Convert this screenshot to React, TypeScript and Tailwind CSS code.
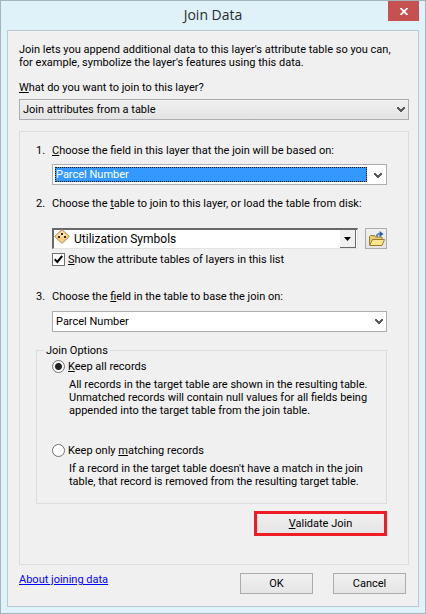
import { useState } from "react";
import type { ReactNode } from "react";

const App = () => {
  return (
    <div className="flex min-h-screen flex-col border border-[#a3b4bb] bg-[#dff2fa] px-1.5 pb-1.5 font-['Roboto',sans-serif] text-[11px] leading-[13px] text-black">
      <TitleBar />
      <main className="flex-1 border border-[#b9cbd2] bg-[#f0f0f0] pt-3 pr-[9px] pb-3 pl-[11px]">
        <p>
          Join lets you append additional data to this layer's attribute table
          so you can,
          <br />
          for example, symbolize the layer's features using this data.
        </p>
        <label htmlFor="kind" className="mt-3 mb-[5px] block">
          <u>W</u>hat do you want to join to this layer?
        </label>
        <Combo
          id="kind"
          value="Join attributes from a table"
          look="bg-linear-to-b from-[#f0f0f0] to-[#e4e4e4]"
        />
        <JoinForm />
        <Footer />
      </main>
    </div>
  );
};

const TitleBar = () => {
  return (
    <header className="grid h-[29px] grid-cols-[31px_1fr_31px] items-start">
      <h1 className="col-start-2 pt-1 text-center font-['Open_Sans',sans-serif] text-[14px] leading-5 text-[#2b2b2b]">
        Join Data
      </h1>
      <button
        aria-label="Close"
        className="grid h-5 w-[31px] place-items-center bg-[#c75050]"
      >
        <svg width="8" height="7" viewBox="0 0 8 7" stroke="#fff" strokeWidth="1.8">
          <path d="M.5 0 7.5 7M7.5 0 .5 7" />
        </svg>
      </button>
    </header>
  );
};

type ComboProps = {
  id: string;
  value: string;
  look?: string;
};

const Combo = ({ id, value, look = "bg-white" }: ComboProps) => {
  return (
    <div className="relative">
      <select
        id={id}
        className={`block h-[21px] w-full appearance-none border border-[#abadb3] pr-5 pl-[3px] ${look}`}
      >
        <option>{value}</option>
      </select>
      <Chevron />
    </div>
  );
};

const Chevron = () => {
  return (
    <svg
      className="pointer-events-none absolute top-[7px] right-1"
      width="8"
      height="7"
      viewBox="0 0 8 7"
      fill="#5a5a5a"
    >
      <path d="M0 1h2v1h1v1h2V2h1V1h2v2H7v1H6v1H5v1H3V5H2V4H1V3H0z" />
    </svg>
  );
};

const Step = ({ n, id, children }: { n: number; id: string; children: ReactNode }) => {
  return (
    <div className="flex">
      <span className="w-4">{n}.</span>
      <label htmlFor={id}>{children}</label>
    </div>
  );
};

const JoinForm = () => {
  const [showAll, setShowAll] = useState(true);
  return (
    <section className="mt-[11px] border border-[#dcdcdc] pt-3 pr-[21px] pb-7 pl-4">
      <Step n={1} id="layerField">
        <u>C</u>hoose the field in this layer that the join will be based on:
      </Step>
      <div className="relative mt-[7px] ml-4 h-[21px] border border-[#abadb3] bg-white py-0.5 pr-[19px] pl-0.5">
        <select
          id="layerField"
          className="block h-[15px] w-full appearance-none border border-dotted border-[#201000] bg-[#3399ff] leading-[13px] text-white"
        >
          <option>Parcel Number</option>
        </select>
        <Chevron />
      </div>

      <div className="mt-3">
        <Step n={2} id="table">
          Choose the <u>t</u>able to join to this layer, or load the table from
          disk:
        </Step>
      </div>
      <div className="mt-[18px] ml-4 flex items-center gap-[7px]">
        <div className="relative flex-1">
          <select
            id="table"
            className="block h-[21px] w-full appearance-none border-t-2 border-r border-b border-l-2 border-t-[#696969] border-r-[#e3e3e3] border-b-[#e3e3e3] border-l-[#696969] bg-white pl-5 text-[12px]"
          >
            <option>Utilization Symbols</option>
          </select>
          <LayerIcon />
          <span className="pointer-events-none absolute top-0.5 right-0.5 bottom-px grid w-4 place-items-center border-r border-b border-[#696969] bg-[#f0f0f0]">
            <svg width="7" height="4" viewBox="0 0 7 4">
              <path d="M0 0h7L3.500 4z" />
            </svg>
          </span>
        </div>
        <button
          aria-label="Browse"
          className="grid h-[21px] w-[22px] place-items-center border border-[#acacac] bg-linear-to-b from-[#f0f0f0] to-[#e5e5e5]"
        >
          <FolderIcon />
        </button>
      </div>
      <label className="mt-1 ml-4 flex items-center gap-[3px]">
        <input
          type="checkbox"
          checked={showAll}
          onChange={() => setShowAll(!showAll)}
          className="peer size-[13px] appearance-none border border-[#707070] bg-white"
        />
        <svg
          className="pointer-events-none invisible absolute ml-0.5 peer-checked:visible"
          width="9"
          height="9"
          viewBox="0 0 9 9"
          fill="none"
          stroke="#000"
          strokeWidth="2"
        >
          <path d="M.7 4.300 3.300 7 8.200 1" />
        </svg>
        <span>
          <u>S</u>how the attribute tables of layers in this list
        </span>
      </label>

      <div className="mt-6 mb-2">
        <Step n={3} id="tableField">
          Choose the <u>f</u>ield in the table to base the join on:
        </Step>
      </div>
      <div className="ml-4">
        <Combo id="tableField" value="Parcel Number" />
      </div>

      <JoinOptions />

      <button className="mt-[7px] ml-auto block h-[25px] w-[133px] border-3 border-[#ee1c25] bg-linear-to-b from-[#f0f0f0] to-[#e5e5e5]">
        <u>V</u>alidate Join
      </button>
    </section>
  );
};

const JoinOptions = () => {
  const [keep, setKeep] = useState("all");
  const radio =
    "size-[13px] appearance-none rounded-full border border-[#707070] bg-white checked:bg-[radial-gradient(circle,#222_3px,#fff_4px)]";
  return (
    <fieldset className="mt-3 border border-[#dcdcdc] pr-2 pb-[15px] pl-[15px]">
      <legend className="-ml-2 px-0.5">Join Options</legend>
      <label className="mt-[3px] flex items-center gap-[3px]">
        <input
          type="radio"
          name="keep"
          checked={keep === "all"}
          onChange={() => setKeep("all")}
          className={radio}
        />
        <span>
          <u>K</u>eep all records
        </span>
      </label>
      <p className="mt-[5px] ml-[17px]">
        All records in the target table are shown in the resulting table.
        <br />
        Unmatched records will contain null values for all fields being
        <br />
        appended into the target table from the join table.
      </p>
      <label className="mt-[27px] flex items-center gap-[3px]">
        <input
          type="radio"
          name="keep"
          checked={keep === "matching"}
          onChange={() => setKeep("matching")}
          className={radio}
        />
        <span>
          Keep only <u>m</u>atching records
        </span>
      </label>
      <p className="mt-[5px] ml-[17px]">
        If a record in the target table doesn't have a match in the join
        <br />
        table, that record is removed from the resulting target table.
      </p>
    </fieldset>
  );
};

const LayerIcon = () => {
  return (
    <svg
      className="pointer-events-none absolute top-px left-0.5"
      width="16"
      height="15"
      viewBox="0 0 16 15"
    >
      <path d="M8 .6 15.400 7.500 8 14.400.6 7.500z" fill="#f8cf87" stroke="#b58a4c" />
      <path d="M8 2.200 13.500 7.500H2.500z" fill="#fde3b0" />
      <path d="M7 4h2v2H7zM4 7h2v2H4zM10 7h2v2h-2z" fill="#33271a" />
    </svg>
  );
};

const FolderIcon = () => {
  return (
    <svg width="17" height="16" viewBox="0 0 17 16">
      <path d="M1.500 14V5.500l1-1h4l1 1.500h6.500v3" fill="#e9cd74" stroke="#9a7d2c" />
      <path d="M1.500 14.500 4.500 8.500h12l-2.500 6z" fill="#fbe58f" stroke="#9a7d2c" />
      <path d="M9 5.500V3h4" fill="none" stroke="#1f5fa5" strokeWidth="1.500" strokeDasharray="2 1" />
      <path d="M11.500 0 15.500 3l-4 3z" fill="#1f5fa5" />
    </svg>
  );
};

const Footer = () => {
  const button =
    "h-[21px] w-[73px] border border-[#acacac] bg-linear-to-b from-[#f0f0f0] to-[#e5e5e5]";
  return (
    <footer className="mt-2 flex items-start pr-[3px]">
      <a href="#" className="text-[#0000ff] underline">
        About joining data
      </a>
      <div className="ml-auto flex gap-5">
        <button className={button}>OK</button>
        <button className={button}>Cancel</button>
      </div>
    </footer>
  );
};

export default App;
